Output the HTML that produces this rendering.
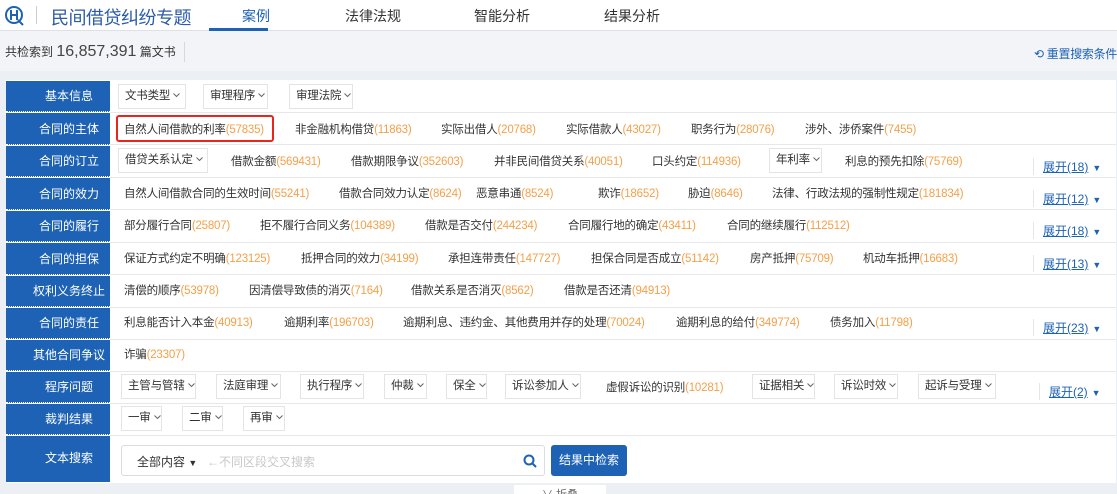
<!DOCTYPE html>
<html><head><meta charset="utf-8"><style>
*{margin:0;padding:0;box-sizing:border-box}
html,body{width:1117px;height:494px;overflow:hidden}
body{background:#eceff3;font-family:"Liberation Sans","Noto Sans CJK SC",sans-serif;font-size:12px;color:#333;position:relative}
.abs{position:absolute;white-space:nowrap}
#hdr{position:absolute;left:0;top:0;width:1117px;height:31px;background:#fff;border-bottom:1px solid #dde1e6}
#cnt{position:absolute;left:0;top:31px;width:1117px;height:40px;background:#f2f4f7}
#tbl{position:absolute;left:6px;top:80px;width:1110px;height:403px;background:#fff}
.lab{position:absolute;left:6px;width:104px;background:#1d62b5;color:#fff;font-size:12px;text-align:center;padding-left:22px;border-bottom:1px dotted #fff}
.line{position:absolute;left:110px;width:1006px;height:1px;background:#e6e8eb}
.box{position:absolute;height:25px;border:1px solid #e4e4e4;background:#fff;line-height:23px;padding-left:6px;font-size:11.5px;white-space:nowrap;letter-spacing:-0.2px}
.box svg{margin-left:3px;vertical-align:middle}
.it{position:absolute;white-space:nowrap;font-size:11.5px;letter-spacing:-0.2px}
.it span{color:#f4a049}
.ex{position:absolute;left:1033px;white-space:nowrap;color:#1d62b5;text-decoration:underline;font-size:12px;padding-left:9px;border-left:1px solid #e6e6e6}
.ex i{font-style:normal;text-decoration:none;display:inline-block;margin-left:4px;font-size:9px}
</style></head><body>
<div id="hdr"></div>
<svg class="abs" style="left:4px;top:5px" width="22" height="22" viewBox="0 0 22 22"><circle cx="10" cy="10" r="8" fill="none" stroke="#1d62b5" stroke-width="2"/><path d="M7 5v10M13 5v10M7 10h6M14 15l5 5" stroke="#1d62b5" stroke-width="2" fill="none"/></svg>
<div class="abs" style="left:36px;top:6px;width:1px;height:18px;background:#ccc"></div>
<div class="abs" style="left:51px;top:4px;font-size:18px;color:#2c5ba8;letter-spacing:-0.5px">民间借贷纠纷专题</div>
<div class="abs" style="left:242px;top:6px;font-size:14px;color:#1d62b5">案例</div>
<div class="abs" style="left:209px;top:28px;width:59px;height:3px;background:#1d62b5"></div>
<div class="abs" style="left:345px;top:6px;font-size:14px">法律法规</div>
<div class="abs" style="left:474px;top:6px;font-size:14px">智能分析</div>
<div class="abs" style="left:604px;top:6px;font-size:14px">结果分析</div>
<div id="cnt"></div>
<div class="abs" style="left:5px;top:43px;font-size:12px">共检索到 <span style="font-size:16px;color:#444">16,857,391</span> 篇文书</div>
<div class="abs" style="left:184px;top:42px;width:1px;height:20px;background:#d5d8dc"></div>
<div class="abs" style="left:1034px;top:45px;font-size:12px;color:#1d62b5;letter-spacing:-0.3px">⟲ 重置搜索条件</div>
<div id="tbl"></div>

<div class="lab" style="top:81px;height:31px;line-height:31px">基本信息</div>
<div class="lab" style="top:113px;height:32px;line-height:32px">合同的主体</div>
<div class="lab" style="top:146px;height:31px;line-height:31px">合同的订立</div>
<div class="lab" style="top:178px;height:32px;line-height:32px">合同的效力</div>
<div class="lab" style="top:211px;height:31px;line-height:31px">合同的履行</div>
<div class="lab" style="top:243px;height:32px;line-height:32px">合同的担保</div>
<div class="lab" style="top:276px;height:31px;line-height:31px">权利义务终止</div>
<div class="lab" style="top:308px;height:31px;line-height:31px">合同的责任</div>
<div class="lab" style="top:340px;height:31px;line-height:31px">其他合同争议</div>
<div class="lab" style="top:372px;height:31px;line-height:31px">程序问题</div>
<div class="lab" style="top:404px;height:31px;line-height:31px">裁判结果</div>
<div class="lab" style="top:436px;height:46px;line-height:44px;border:none">文本搜索</div>

<div class="line" style="top:112px"></div><div class="line" style="top:144px"></div><div class="line" style="top:177px"></div><div class="line" style="top:209px"></div><div class="line" style="top:242px"></div><div class="line" style="top:274px"></div><div class="line" style="top:307px"></div><div class="line" style="top:339px"></div><div class="line" style="top:371px"></div><div class="line" style="top:403px"></div><div class="line" style="top:435px"></div>

<div class="box" style="left:118px;top:84px;width:68px">文书类型<svg width="7" height="5"><path d="M.5 .5l3 3 3-3" stroke="#666" fill="none"/></svg></div>
<div class="box" style="left:203px;top:84px;width:65px">审理程序<svg width="7" height="5"><path d="M.5 .5l3 3 3-3" stroke="#666" fill="none"/></svg></div>
<div class="box" style="left:289px;top:84px;width:64px">审理法院<svg width="7" height="5"><path d="M.5 .5l3 3 3-3" stroke="#666" fill="none"/></svg></div>

<div class="abs" style="left:116px;top:115px;width:158px;height:27px;border:2px solid #e8261c;border-radius:3px"></div>
<div class="it" style="left:124px;top:121px">自然人间借款的利率<span>(57835)</span></div>
<div class="it" style="left:295px;top:121px">非金融机构借贷<span>(11863)</span></div>
<div class="it" style="left:441px;top:121px">实际出借人<span>(20768)</span></div>
<div class="it" style="left:566px;top:121px">实际借款人<span>(43027)</span></div>
<div class="it" style="left:691px;top:121px">职务行为<span>(28076)</span></div>
<div class="it" style="left:805px;top:121px">涉外、涉侨案件<span>(7455)</span></div>

<div class="box" style="left:118px;top:148px;width:90px">借贷关系认定<svg width="7" height="5"><path d="M.5 .5l3 3 3-3" stroke="#666" fill="none"/></svg></div>
<div class="it" style="left:231px;top:153px">借款金额<span>(569431)</span></div>
<div class="it" style="left:351px;top:153px">借款期限争议<span>(352603)</span></div>
<div class="it" style="left:494px;top:153px">并非民间借贷关系<span>(40051)</span></div>
<div class="it" style="left:652px;top:153px">口头约定<span>(114936)</span></div>
<div class="box" style="left:769px;top:148px;width:53px">年利率<svg width="7" height="5"><path d="M.5 .5l3 3 3-3" stroke="#666" fill="none"/></svg></div>
<div class="it" style="left:845px;top:153px">利息的预先扣除<span>(75769)</span></div>
<div class="ex" style="top:158px">展开(18)<i>▼</i></div>

<div class="it" style="left:124px;top:185px">自然人间借款合同的生效时间<span>(55241)</span></div>
<div class="it" style="left:339px;top:185px">借款合同效力认定<span>(8624)</span></div>
<div class="it" style="left:476px;top:185px">恶意串通<span>(8524)</span></div>
<div class="it" style="left:598px;top:185px">欺诈<span>(18652)</span></div>
<div class="it" style="left:688px;top:185px">胁迫<span>(8646)</span></div>
<div class="it" style="left:772px;top:185px">法律、行政法规的强制性规定<span>(181834)</span></div>
<div class="ex" style="top:190px">展开(12)<i>▼</i></div>

<div class="it" style="left:124px;top:217px">部分履行合同<span>(25807)</span></div>
<div class="it" style="left:260px;top:217px">拒不履行合同义务<span>(104389)</span></div>
<div class="it" style="left:425px;top:217px">借款是否交付<span>(244234)</span></div>
<div class="it" style="left:568px;top:217px">合同履行地的确定<span>(43411)</span></div>
<div class="it" style="left:727px;top:217px">合同的继续履行<span>(112512)</span></div>
<div class="ex" style="top:222px">展开(18)<i>▼</i></div>

<div class="it" style="left:124px;top:250px">保证方式约定不明确<span>(123125)</span></div>
<div class="it" style="left:301px;top:250px">抵押合同的效力<span>(34199)</span></div>
<div class="it" style="left:448px;top:250px">承担连带责任<span>(147727)</span></div>
<div class="it" style="left:591px;top:250px">担保合同是否成立<span>(51142)</span></div>
<div class="it" style="left:750px;top:250px">房产抵押<span>(75709)</span></div>
<div class="it" style="left:863px;top:250px">机动车抵押<span>(16683)</span></div>
<div class="ex" style="top:255px">展开(13)<i>▼</i></div>

<div class="it" style="left:124px;top:282px">清偿的顺序<span>(53978)</span></div>
<div class="it" style="left:249px;top:282px">因清偿导致债的消灭<span>(7164)</span></div>
<div class="it" style="left:411px;top:282px">借款关系是否消灭<span>(8562)</span></div>
<div class="it" style="left:564px;top:282px">借款是否还清<span>(94913)</span></div>

<div class="it" style="left:124px;top:314px">利息能否计入本金<span>(40913)</span></div>
<div class="it" style="left:284px;top:314px">逾期利率<span>(196703)</span></div>
<div class="it" style="left:403px;top:314px">逾期利息、违约金、其他费用并存的处理<span>(70024)</span></div>
<div class="it" style="left:676px;top:314px">逾期利息的给付<span>(349774)</span></div>
<div class="it" style="left:830px;top:314px">债务加入<span>(11798)</span></div>
<div class="ex" style="top:319px">展开(23)<i>▼</i></div>

<div class="it" style="left:124px;top:346px">诈骗<span>(23307)</span></div>

<div class="box" style="left:121px;top:374px;width:75px">主管与管辖<svg width="7" height="5"><path d="M.5 .5l3 3 3-3" stroke="#666" fill="none"/></svg></div>
<div class="box" style="left:216px;top:374px;width:65px">法庭审理<svg width="7" height="5"><path d="M.5 .5l3 3 3-3" stroke="#666" fill="none"/></svg></div>
<div class="box" style="left:300px;top:374px;width:64px">执行程序<svg width="7" height="5"><path d="M.5 .5l3 3 3-3" stroke="#666" fill="none"/></svg></div>
<div class="box" style="left:384px;top:374px;width:43px">仲裁<svg width="7" height="5"><path d="M.5 .5l3 3 3-3" stroke="#666" fill="none"/></svg></div>
<div class="box" style="left:446px;top:374px;width:41px">保全<svg width="7" height="5"><path d="M.5 .5l3 3 3-3" stroke="#666" fill="none"/></svg></div>
<div class="box" style="left:505px;top:374px;width:76px">诉讼参加人<svg width="7" height="5"><path d="M.5 .5l3 3 3-3" stroke="#666" fill="none"/></svg></div>
<div class="it" style="left:606px;top:379px">虚假诉讼的识别<span>(10281)</span></div>
<div class="box" style="left:752px;top:374px;width:63px">证据相关<svg width="7" height="5"><path d="M.5 .5l3 3 3-3" stroke="#666" fill="none"/></svg></div>
<div class="box" style="left:834px;top:374px;width:64px">诉讼时效<svg width="7" height="5"><path d="M.5 .5l3 3 3-3" stroke="#666" fill="none"/></svg></div>
<div class="box" style="left:918px;top:374px;width:78px">起诉与受理<svg width="7" height="5"><path d="M.5 .5l3 3 3-3" stroke="#666" fill="none"/></svg></div>
<div class="ex" style="top:383px;left:1039px">展开(2)<i>▼</i></div>

<div class="box" style="left:121px;top:406px;width:41px">一审<svg width="7" height="5"><path d="M.5 .5l3 3 3-3" stroke="#666" fill="none"/></svg></div>
<div class="box" style="left:182px;top:406px;width:41px">二审<svg width="7" height="5"><path d="M.5 .5l3 3 3-3" stroke="#666" fill="none"/></svg></div>
<div class="box" style="left:243px;top:406px;width:42px">再审<svg width="7" height="5"><path d="M.5 .5l3 3 3-3" stroke="#666" fill="none"/></svg></div>

<div class="abs" style="left:121px;top:445px;width:424px;height:31px;border:1px solid #dcdcdc;border-radius:3px;background:#fff"></div>
<div class="abs" style="left:137px;top:453px">全部内容 <span style="font-size:9px">▼</span></div>
<div class="abs" style="left:207px;top:453px;color:#c8c8c8">←不同区段交叉搜索</div>
<svg class="abs" style="left:523px;top:454px" width="14" height="14"><circle cx="6" cy="6" r="4.5" fill="none" stroke="#1d62b5" stroke-width="2"/><path d="M9.5 9.5l3.5 3.5" stroke="#1d62b5" stroke-width="2"/></svg>
<div class="abs" style="left:551px;top:445px;width:76px;height:31px;background:#1d62b5;border-radius:3px;color:#fff;text-align:center;line-height:31px">结果中检索</div>
<div class="abs" style="left:514px;top:485px;width:92px;height:9px;background:#fff;overflow:hidden;text-align:center;font-size:11px;color:#666;line-height:20px">∨ 折叠</div>
</body></html>
